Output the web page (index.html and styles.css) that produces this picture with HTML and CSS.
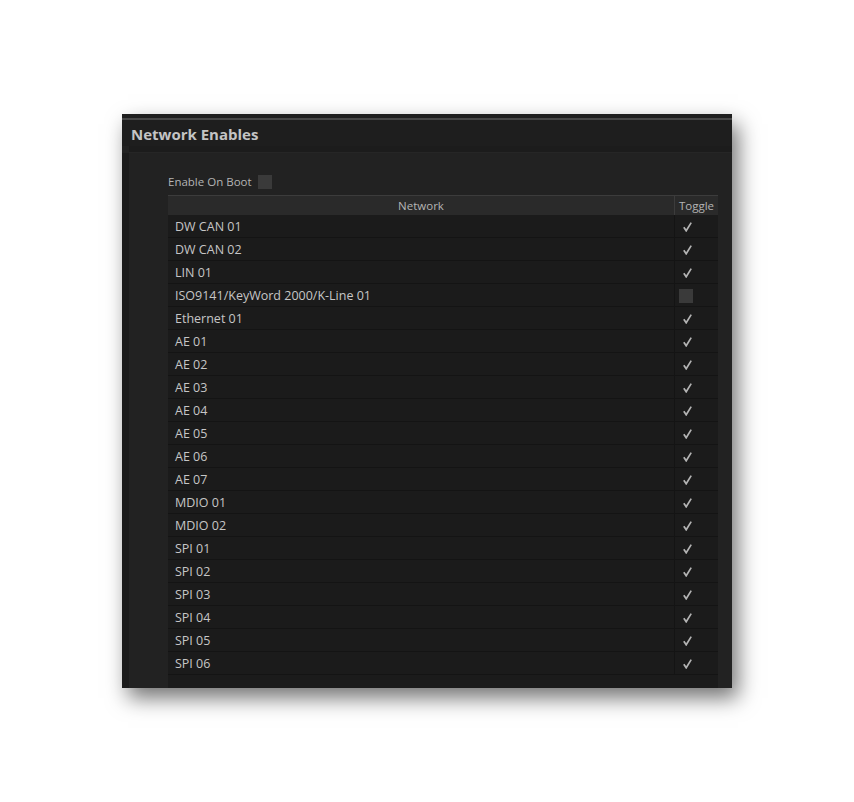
FILE: index.html
```html
<!DOCTYPE html>
<html lang="en">
<head>
    <meta charset="UTF-8">
    <title>Network Enables</title>
    <link rel="stylesheet" href="styles.css">
</head>
<body>
    <div class="window">
        <div class="title-bar">Network Enables</div>
        <div class="title-gap"></div>
        <div class="body">
            <div class="side-strip"></div>
            <div class="panel">
                <div class="boot-row">
                    <span>Enable On Boot</span>
                    <span class="box"></span>
                </div>
                <div class="grid">
                    <div class="grid-head">
                        <div class="col-name">Network</div>
                        <div class="col-toggle">Toggle</div>
                    </div>
                    <div class="grid-body" id="rows"></div>
                </div>
            </div>
        </div>
    </div>

    <script>
        var networks = [
            ['DW CAN 01', true], ['DW CAN 02', true], ['LIN 01', true],
            ['ISO9141/KeyWord 2000/K-Line 01', false], ['Ethernet 01', true],
            ['AE 01', true], ['AE 02', true], ['AE 03', true], ['AE 04', true],
            ['AE 05', true], ['AE 06', true], ['AE 07', true],
            ['MDIO 01', true], ['MDIO 02', true],
            ['SPI 01', true], ['SPI 02', true], ['SPI 03', true],
            ['SPI 04', true], ['SPI 05', true], ['SPI 06', true]
        ];

        var tick = '<svg class="tick" width="9" height="10" viewBox="0 0 9 10">' +
            '<polyline points="0.8,5.2 3.2,8.8 8.2,0.6" fill="none" stroke="#b4b4b4" stroke-width="1.7"/></svg>';

        var rows = document.getElementById('rows');
        networks.forEach(function(n) {
            var row = document.createElement('div');
            row.className = 'grid-row';
            var mark = n[1] ? tick : '<span class="box"></span>';
            row.innerHTML = '<div class="col-name">' + n[0] + '</div><div class="col-toggle">' + mark + '</div>';
            rows.appendChild(row);
        });
    </script>
</body>
</html>
```

FILE: styles.css
```css
body {
    margin: 0;
    background-color: #ffffff;
    font-family: "Open Sans", "Noto Sans", sans-serif;
    height: 802px;
}
.window {
    box-sizing: border-box;
    margin: 114px 0 0 122px;
    width: 610px;
    height: 574px;
    background-color: #222222;
    display: flex;
    flex-direction: column;
    box-shadow: 6px 10px 20px rgba(0, 0, 0, 0.55);
    border-top: 4px solid #1f1f1f;
}
.title-bar {
    border-top: 2px solid #474747;
    background-color: #1e1e1e;
    color: #c4c4c4;
    font-weight: bold;
    font-size: 15px;
    height: 26px;
    line-height: 28px;
    padding-left: 9px;
}
.title-gap {
    height: 6px;
    background-color: #1c1c1c;
    margin-left: 7px;
    border-bottom: 1px solid #262626;
}
.body {
    flex-grow: 1;
    display: flex;
    min-height: 0;
}
.side-strip {
    width: 7px;
    background-color: #1b1b1b;
}
.panel {
    flex-grow: 1;
    padding: 21px 14px 0 39px;
    display: flex;
    flex-direction: column;
}
.boot-row {
    display: flex;
    align-items: center;
    gap: 6px;
    color: #b4b4b4;
    font-size: 11.5px;
    height: 15px;
}
.box {
    display: inline-block;
    width: 14px;
    height: 14px;
    background-color: #3a3a3a;
}
.grid {
    margin-top: 6px;
    flex-grow: 1;
    background-color: #1b1b1b;
}
.grid-head {
    display: flex;
    height: 19px;
    border-top: 1px solid #3c3c3c;
    background-color: #2a2a2a;
    color: #b4b4b4;
    font-size: 11.5px;
    line-height: 19px;
}
.grid-head .col-name {
    text-align: center;
    padding-left: 0;
}
.grid-head .col-toggle {
    border-left: 1px solid #3c3c3c;
    justify-content: center;
}
.col-name {
    flex-grow: 1;
    padding-left: 7px;
}
.col-toggle {
    width: 43px;
    display: flex;
    align-items: center;
    padding-left: 0;
}
.grid-row {
    display: flex;
    height: 22px;
    border-bottom: 1px solid #141414;
    color: #c6c6c6;
    font-size: 12.5px;
}
.grid-row .col-name {
    padding-top: 2px;
    line-height: 20px;
}
.grid-row .col-toggle {
    border-left: 1px solid #141414;
    width: 39px;
    padding-left: 4px;
    padding-top: 1px;
}
.tick {
    margin-left: 4px;
}
```
